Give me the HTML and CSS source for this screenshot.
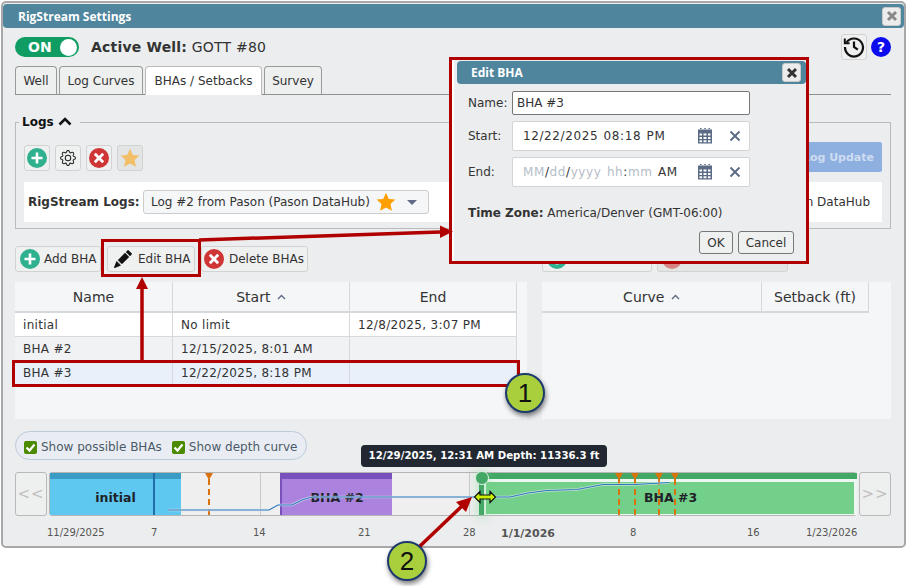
FILE: index.html

```html
<!DOCTYPE html>
<html lang="en" dir="ltr">
<head>
  <meta charset="UTF-8">
  <title>RigStream Settings</title>
  <link rel="stylesheet" href="styles.css">
</head>
<body>
  <svg class="defs" width="0" height="0">
    <symbol id="i-add" viewBox="0 0 20 20">
      <circle cx="10" cy="10" r="10" fill="#2fb18f"/>
      <path d="M10 4.5v11M4.5 10h11" stroke="#fff" stroke-width="2.6"/>
    </symbol>
    <symbol id="i-del" viewBox="0 0 20 20">
      <circle cx="10" cy="10" r="10" fill="#cf3535"/>
      <path d="M5.8 5.8l8.4 8.4M14.2 5.8l-8.4 8.4" stroke="#fff" stroke-width="2.8"/>
    </symbol>
    <symbol id="i-star" viewBox="0 0 20 20">
      <path d="M10 .8l2.8 6.1 6.6.7-4.900 4.500 1.400 6.600L10 15.400l-5.900 3.300 1.400-6.600L.6 7.600l6.600-.7z" fill="#ffa000"/>
    </symbol>
    <symbol id="i-cal" viewBox="0 0 16 16">
      <path fill="#5b6a85" fill-rule="evenodd" d="M3 0h1.500v2h-1.500zM7.250 0h1.500v2h-1.500zM11.500 0h1.500v2h-1.500zM1 1.500h14v14H1zM2.500 5.500v2h2.500v-2zM6.500 5.500v2h3v-2zM11 5.500v2h2.500v-2zM2.500 9v2h2.500v-2zM6.500 9v2h3v-2zM11 9v2h2.500v-2zM2.500 12.300v1.900h2.500v-1.900zM6.500 12.300v1.900h3v-1.900zM11 12.300v1.900h2.500v-1.900z"/>
    </symbol>
    <symbol id="i-x" viewBox="0 0 12 12">
      <path d="M1.500 1.500l9 9M10.500 1.500l-9 9" stroke="#5b6a85" stroke-width="1.900"/>
    </symbol>
    <symbol id="i-close" viewBox="0 0 12 12">
      <path d="M2 2l8 8M10 2l-8 8" stroke="currentColor" stroke-width="3"/>
    </symbol>
    <symbol id="i-sort" viewBox="0 0 9 6">
      <path d="M1 5l3.500-3.500L8 5" fill="none" stroke="#5f6b85" stroke-width="1.400"/>
    </symbol>
  </svg>

  <div class="window">
    <div class="titlebar">
      <span>RigStream Settings</span>
      <button class="close-btn faded"><svg width="12" height="12"><use href="#i-close"/></svg></button>
    </div>

    <div class="content">
      <div class="top-row">
        <div class="toggle"><span>ON</span><i class="knob"></i></div>
        <div class="active-well"><b>Active Well:</b> GOTT #80</div>
        <button class="history-btn">
          <svg width="22" height="22" viewBox="0 0 22 22" fill="none" stroke="#111" stroke-width="2.200">
            <path d="M3.500 6.500A9 9 0 1 1 2 11"/>
            <path d="M1.800 2.500v4.800h4.800" stroke-width="2"/>
            <path d="M11 5.500V11l3.800 2.600"/>
          </svg>
        </button>
        <div class="help">?</div>
      </div>

      <div class="tabs">
        <div class="tab tab-well">Well</div>
        <div class="tab tab-curves">Log Curves</div>
        <div class="tab tab-bhas active">BHAs / Setbacks</div>
        <div class="tab tab-survey">Survey</div>
      </div>

      <fieldset class="logs">
        <legend>Logs <svg width="14" height="9" viewBox="0 0 14 9" fill="none" stroke="#111" stroke-width="2.600"><path d="M1.500 7.500L7 2l5.500 5.500"/></svg></legend>
        <div class="log-tools">
          <button class="icon-btn"><svg width="20" height="20"><use href="#i-add"/></svg></button>
          <button class="icon-btn">
            <svg width="16" height="16" viewBox="0 0 16 16" fill="#222">
              <path d="M8 4.754a3.246 3.246 0 1 0 0 6.492 3.246 3.246 0 0 0 0-6.492zM5.754 8a2.246 2.246 0 1 1 4.492 0 2.246 2.246 0 0 1-4.492 0z"/>
              <path d="M9.796 1.343c-.527-1.790-3.065-1.790-3.592 0l-.094.319a.873.873 0 0 1-1.255.52l-.292-.16c-1.640-.892-3.433.902-2.540 2.541l.159.292a.873.873 0 0 1-.52 1.255l-.319.094c-1.790.527-1.790 3.065 0 3.592l.319.094a.873.873 0 0 1 .52 1.255l-.16.292c-.892 1.640.901 3.434 2.541 2.540l.292-.159a.873.873 0 0 1 1.255.52l.094.319c.527 1.790 3.065 1.790 3.592 0l.094-.319a.873.873 0 0 1 1.255-.52l.292.16c1.640.893 3.434-.902 2.540-2.541l-.159-.292a.873.873 0 0 1 .52-1.255l.319-.094c1.790-.527 1.790-3.065 0-3.592l-.319-.094a.873.873 0 0 1-.52-1.255l.16-.292c.893-1.640-.902-3.433-2.541-2.540l-.292.159a.873.873 0 0 1-1.255-.52l-.094-.319zm-2.633.283c.246-.835 1.428-.835 1.674 0l.094.319a1.873 1.873 0 0 0 2.693 1.115l.291-.16c.764-.415 1.600.42 1.184 1.185l-.159.292a1.873 1.873 0 0 0 1.116 2.692l.318.094c.835.246.835 1.428 0 1.674l-.319.094a1.873 1.873 0 0 0-1.115 2.693l.16.291c.415.764-.42 1.600-1.185 1.184l-.291-.159a1.873 1.873 0 0 0-2.693 1.116l-.094.318c-.246.835-1.428.835-1.674 0l-.094-.319a1.873 1.873 0 0 0-2.692-1.115l-.292.16c-.764.415-1.600-.42-1.184-1.185l.159-.291A1.873 1.873 0 0 0 1.945 8.930l-.319-.094c-.835-.246-.835-1.428 0-1.674l.319-.094A1.873 1.873 0 0 0 3.060 4.377l-.16-.292c-.415-.764.42-1.600 1.185-1.184l.292.159a1.873 1.873 0 0 0 2.692-1.115l.094-.319z"/>
            </svg>
          </button>
          <button class="icon-btn"><svg width="20" height="20"><use href="#i-del"/></svg></button>
          <button class="icon-btn disabled"><svg width="20" height="20" class="half"><use href="#i-star"/></svg></button>
          <button class="update-btn">Log Update</button>
        </div>
        <div class="log-strip">
          <b>RigStream Logs:</b>
          <div class="log-select">
            <span>Log #2 from Pason (Pason DataHub)</span>
            <svg width="20" height="20"><use href="#i-star"/></svg>
            <i class="caret"></i>
          </div>
          <span class="log-source">Pason DataHub</span>
        </div>
      </fieldset>

      <div class="bha-columns">
        <div>
          <div class="toolbar">
            <button class="text-btn btn-add"><svg width="20" height="20"><use href="#i-add"/></svg>Add BHA</button>
            <button class="text-btn btn-edit">
              <svg width="18" height="18" viewBox="0 0 16 16" fill="#111">
                <path d="M12.854.146a.5.5 0 0 0-.707 0L10.500 1.793 14.207 5.500l1.647-1.646a.5.5 0 0 0 0-.708l-3-3zm.646 6.061L9.793 2.500 3.293 9H3.500a.5.5 0 0 1 .5.5v.5h.5a.5.5 0 0 1 .5.5v.5h.5a.5.5 0 0 1 .5.5v.5h.5a.5.5 0 0 1 .5.5v.207l6.500-6.500zm-7.468 7.468A.5.5 0 0 1 6 13.500V13h-.5a.5.5 0 0 1-.5-.5V12h-.5a.5.5 0 0 1-.5-.5V11h-.5a.5.5 0 0 1-.5-.5V10h-.5a.499.499 0 0 1-.175-.032l-.179.178a.5.5 0 0 0-.11.168l-2 5a.5.5 0 0 0 .65.65l5-2a.5.5 0 0 0 .168-.11l.178-.178z"/>
              </svg>Edit BHA</button>
            <button class="text-btn btn-delete"><svg width="20" height="20"><use href="#i-del"/></svg>Delete BHAs</button>
          </div>
          <div class="grid-panel">
            <div class="grid bha-grid">
              <div class="cell head">Name</div>
              <div class="cell head">Start <svg class="sort" width="9" height="6"><use href="#i-sort"/></svg></div>
              <div class="cell head">End</div>
              <div class="cell">initial</div>
              <div class="cell">No limit</div>
              <div class="cell">12/8/2025, 3:07 PM</div>
              <div class="cell alt">BHA #2</div>
              <div class="cell alt">12/15/2025, 8:01 AM</div>
              <div class="cell alt"></div>
              <div class="cell sel">BHA #3</div>
              <div class="cell sel">12/22/2025, 8:18 PM</div>
              <div class="cell sel"></div>
            </div>
          </div>
        </div>
        <div>
          <div class="toolbar">
            <button class="text-btn setback-add"><svg width="20" height="20"><use href="#i-add"/></svg></button>
            <button class="text-btn setback-del"><svg width="20" height="20" class="half"><use href="#i-del"/></svg></button>
          </div>
          <div class="grid-panel">
            <div class="grid curve-grid">
              <div class="cell head">Curve <svg class="sort" width="9" height="6"><use href="#i-sort"/></svg></div>
              <div class="cell head">Setback (ft)</div>
            </div>
          </div>
        </div>
      </div>

      <div class="options">
        <label class="check"><i class="box"><svg width="11" height="11" viewBox="0 0 11 11" fill="none" stroke="#fff" stroke-width="2.200"><path d="M1.500 5.500l3 3 5-6"/></svg></i>Show possible BHAs</label>
        <label class="check"><i class="box"><svg width="11" height="11" viewBox="0 0 11 11" fill="none" stroke="#fff" stroke-width="2.200"><path d="M1.500 5.500l3 3 5-6"/></svg></i>Show depth curve</label>
      </div>

      <div class="timeline">
        <button class="nav-btn">&lt;&lt;</button>
        <div class="track">
          <i class="grid-line gl-1"></i><i class="grid-line gl-2"></i><i class="grid-line gl-3"></i><i class="grid-line gl-4"></i><i class="grid-line gl-5"></i>
          <div class="bar bar-initial">initial</div>
          <i class="start-line"></i>
          <div class="bar bar-2">BHA #2</div>
          <div class="bar bar-3">BHA #3</div>
          <i class="marker m-1"></i><i class="marker m-2"></i><i class="marker m-3"></i><i class="marker m-4"></i><i class="marker m-5"></i>
          <i class="handle"></i>
          <svg class="curve" width="806" height="42" viewBox="50 473 806 42" fill="none">
            <path stroke="#e4ebf2" stroke-opacity="0.7" stroke-width="2.600" d="M168 510H269L278 505H292L302 500L312 497H510L528 493L547 490.500L577 489.500L603 484.500H635L669 482.500"/>
            <path stroke="#2d79bd" stroke-width="1.100" d="M168 510H269L278 505H292L302 500L312 497H510L528 493L547 490.500L577 489.500L603 484.500H635L669 482.500"/>
          </svg>
        </div>
        <button class="nav-btn">&gt;&gt;</button>
      </div>
      <div class="axis">
        <span class="t-1">11/29/2025</span>
        <span class="t-2">7</span>
        <span class="t-3">14</span>
        <span class="t-4">21</span>
        <span class="t-5">28</span>
        <span class="t-6">1/1/2026</span>
        <span class="t-7">8</span>
        <span class="t-8">16</span>
        <span class="t-9">1/23/2026</span>
      </div>
    </div>
  </div>

  <!-- popup and callouts sit over the settings window -->
  <div class="dialog-frame">
    <div class="dialog">
      <div class="dialog-title">
        <span>Edit BHA</span>
        <button class="close-btn"><svg width="12" height="12"><use href="#i-close"/></svg></button>
      </div>
      <div class="dialog-body">
        <div class="form-row">
          <label>Name:</label>
          <div class="name-input">BHA #3</div>
        </div>
        <div class="form-row date-row">
          <label>Start:</label>
          <div class="date-input">
            <span class="date-text">12/22/2025 08:18 PM</span>
            <svg width="16" height="16"><use href="#i-cal"/></svg>
            <svg width="12" height="12"><use href="#i-x"/></svg>
          </div>
        </div>
        <div class="form-row date-row">
          <label>End:</label>
          <div class="date-input">
            <span class="date-text"><em>MM</em>/<em>dd</em>/<em>yyyy</em> <em>hh</em>:<em>mm</em> AM</span>
            <svg width="16" height="16"><use href="#i-cal"/></svg>
            <svg width="12" height="12"><use href="#i-x"/></svg>
          </div>
        </div>
        <div class="time-zone"><b>Time Zone:</b> America/Denver (GMT-06:00)</div>
        <div class="dialog-actions">
          <button class="plain-btn btn-ok">OK</button>
          <button class="plain-btn btn-cancel">Cancel</button>
        </div>
      </div>
    </div>
  </div>

  <div class="tooltip">12/29/2025, 12:31 AM Depth: 11336.3 ft</div>

  <svg class="callouts" width="906" height="586" viewBox="0 0 906 586">
    <g fill="none" stroke="#b00000" stroke-width="3">
      <rect x="102.500" y="240.500" width="97" height="35"/>
      <rect x="13.500" y="361.500" width="505" height="24"/>
      <path d="M142 361V287" stroke-width="3.500"/>
      <path d="M199 240L440 232" stroke-width="3.500"/>
      <path d="M419 547L462 506" stroke-width="3.500"/>
    </g>
    <g fill="#b00000">
      <path d="M142 277L136 289H148z"/>
      <path d="M453 231.500L440 225.500V238z"/>
      <path d="M472 497L456 502L466 512z"/>
    </g>
    <!-- resize cursor on the BHA #3 handle -->
    <path d="M474.500 497L480 491.500V495H490V491.500L495.500 497L490 502.500V499H480V502.500z" fill="#c8f000" stroke="#111" stroke-width="1.200"/>
  </svg>

  <div class="badge badge-1">1</div>
  <div class="badge badge-2">2</div>
</body>
</html>
```

FILE: styles.css

```css
* {
  box-sizing: border-box;
}
html, body {
  height: 586px;
}
body {
  margin: 0;
  background: #fff;
  color: #333;
  font-family: "DejaVu Sans", Verdana, sans-serif;
  font-size: 12px;
  position: relative;
  overflow: hidden;
}
button {
  font-family: inherit;
  font-size: 12px;
  color: #333;
}
.defs {
  position: absolute;
}

/* window */
.window {
  width: 905px;
  height: 547px;
  margin: 1px 0 0 1px;
  border: 2px solid #a8a8a8;
  border-radius: 5px;
  background: #ecedee;
}
.titlebar {
  height: 24px;
  margin-top: 1px;
  padding: 0 3px 0 15px;
  display: flex;
  align-items: center;
  justify-content: space-between;
  background: #4f869e;
  border-radius: 4px;
  color: #fff;
  font-family: "Open Sans", sans-serif;
  font-size: 12px;
  font-weight: 700;
}
.close-btn {
  width: 19px;
  height: 19px;
  padding: 0;
  display: flex;
  align-items: center;
  justify-content: center;
  background: #ececec;
  border: 1px solid #c9c9c9;
  border-radius: 3px;
  color: #333;
}
.close-btn.faded {
  color: #888;
}
.content {
  padding: 0 13px 0 12px;
}

/* top row */
.top-row {
  height: 26px;
  margin-top: 6px;
  display: flex;
  align-items: center;
}
.toggle {
  width: 64px;
  height: 20px;
  padding: 0 2px 0 13px;
  display: flex;
  align-items: center;
  justify-content: space-between;
  background: #0f9d63;
  border-radius: 10px;
  color: #fff;
  font-size: 14px;
  font-weight: 700;
}
.knob {
  width: 17px;
  height: 17px;
  background: #fff;
  border-radius: 50%;
}
.active-well {
  margin-left: 12px;
  flex: 1;
  font-size: 14px;
  letter-spacing: 0.2px;
}
.history-btn {
  width: 26px;
  height: 26px;
  padding: 0;
  display: flex;
  align-items: center;
  justify-content: center;
  background: #f0f0f0;
  border: 1px solid #d2d2d2;
  border-radius: 3px;
}
.help {
  width: 20px;
  height: 20px;
  margin: 0 0 0 4px;
  background: #0b0bee;
  border-radius: 50%;
  color: #fff;
  font-size: 14px;
  font-weight: 700;
  line-height: 20px;
  text-align: center;
}

/* tabs */
.tabs {
  height: 29px;
  margin-top: 6px;
  display: flex;
  border-bottom: 1px solid #8f8f8f;
}
.tab {
  height: 28px;
  margin-right: 2px;
  display: flex;
  align-items: center;
  justify-content: center;
  background: #eeefef;
  border: 1px solid #999;
  border-bottom: none;
  border-radius: 4px 4px 0 0;
}
.tab-well {
  width: 42px;
}
.tab-curves {
  width: 84px;
}
.tab-bhas {
  width: 117px;
}
.tab-survey {
  width: 58px;
}
.tab.active {
  height: 29px;
  background: #fff;
  border-color: #bbb;
}

/* logs */
.logs {
  height: 114px;
  margin: 20px 0 0;
  padding: 16px 8px 0;
  border: 1px solid #bbb;
}
.logs legend {
  padding: 0 8px 0 3px;
  margin-left: -5px;
  font-size: 12px;
  font-weight: 700;
  color: #111;
}
.log-tools {
  height: 26px;
  display: flex;
  gap: 5px;
}
.icon-btn {
  width: 26px;
  height: 26px;
  padding: 0;
  display: flex;
  align-items: center;
  justify-content: center;
  background: #eff0f0;
  border: 1px solid #d2d2d2;
  border-radius: 3px;
}
.icon-btn.disabled {
  background: #e3e4e4;
}
.half {
  opacity: 0.55;
}
.update-btn {
  width: 120px;
  height: 30px;
  margin: -3px 0 0 auto;
  padding: 0 8px;
  background: #8db0e1;
  border: none;
  border-radius: 2px;
  color: #cfdcf0;
  font-size: 11px;
  font-weight: 700;
  text-align: right;
}
.log-strip {
  height: 40px;
  margin-top: 11px;
  padding: 0 12px 0 4px;
  display: flex;
  align-items: center;
  background: #fff;
}
.log-strip b {
  flex: none;
  width: 115px;
  white-space: nowrap;
}
.log-select {
  flex: none;
  width: 286px;
  height: 24px;
  padding: 0 7px;
  display: flex;
  align-items: center;
  background: #f5f6f8;
  border: 1px solid #ccc;
  border-radius: 3px;
  white-space: nowrap;
}
.log-select svg {
  margin-left: 6px;
}
.caret {
  margin-left: 11px;
  border-left: 5px solid transparent;
  border-right: 5px solid transparent;
  border-top: 5px solid #5f6b85;
}
.log-source {
  margin-left: auto;
}

/* BHA and curve tables */
.bha-columns {
  margin-top: 17px;
  display: grid;
  grid-template-columns: 512px 349px;
  column-gap: 15px;
}
.toolbar {
  height: 26px;
  display: flex;
  gap: 6px;
}
.text-btn {
  height: 26px;
  padding: 0;
  display: flex;
  align-items: center;
  background: #eff0f0;
  border: 1px solid #d2d2d2;
  border-radius: 3px;
  white-space: nowrap;
}
.btn-add {
  width: 86px;
  padding-left: 4px;
  gap: 4px;
}
.btn-edit {
  width: 88px;
  padding-left: 6px;
  gap: 6px;
}
.btn-delete {
  width: 107px;
  padding-left: 2px;
  gap: 5px;
}
.setback-add {
  width: 110px;
  padding-left: 4px;
  margin-right: -1px;
}
.setback-del {
  width: 131px;
  padding-left: 4px;
  background: #e3e4e4;
}
.grid-panel {
  height: 137px;
  margin-top: 10px;
  background: #f5f6f8;
}
.grid {
  display: grid;
}
.bha-grid {
  width: 502px;
  grid-template-columns: 158px 177px 167px;
  grid-template-rows: 31px 24px 24px 24px;
}
.curve-grid {
  width: 327px;
  grid-template-columns: 220px 107px;
  grid-template-rows: 31px;
}
.cell {
  padding: 0 8px;
  display: flex;
  align-items: center;
  background: #fff;
  border-right: 1px solid #d6d8db;
  border-bottom: 1px solid #d6d8db;
  letter-spacing: 0.3px;
  white-space: pre;
}
.cell.head {
  padding-top: 1px;
  justify-content: center;
  background: #f5f6f8;
  font-size: 14px;
  letter-spacing: 0;
  border-bottom: 2px solid #d6d8db;
}
.cell.alt {
  background: #f1f2f3;
}
.cell.sel {
  background: #e9f0fa;
}
.sort {
  margin-left: 2px;
}

/* timeline options */
.options {
  width: 292px;
  height: 29px;
  margin-top: 12px;
  padding: 3px 8px 0;
  display: flex;
  align-items: center;
  gap: 10px;
  background: #e9edf3;
  border: 1px solid #bccbd8;
  border-radius: 15px;
}
.check {
  display: flex;
  align-items: center;
  gap: 4px;
  color: #4b5a68;
}
.box {
  width: 13px;
  height: 13px;
  display: flex;
  align-items: center;
  justify-content: center;
  background: #4c8a00;
  border-radius: 2px;
}

/* timeline */
.timeline {
  height: 44px;
  margin-top: 12px;
  display: flex;
  gap: 2px;
}
.nav-btn {
  width: 32px;
  height: 44px;
  padding: 0;
  background: #eeefef;
  border: 1px solid #b9b9b9;
  border-radius: 3px;
  color: #c0c0c0;
  font-size: 15px;
  letter-spacing: 1px;
}
.track {
  width: 808px;
  height: 44px;
  position: relative;
  background: #efefef;
  border: 1px solid #b5b5b5;
  border-radius: 3px;
}
.grid-line {
  position: absolute;
  top: 0;
  bottom: 0;
  width: 1px;
  background: #c9c9c9;
}
.gl-1 { left: 210px; }
.gl-2 { left: 315px; }
.gl-3 { left: 419px; }
.gl-4 { left: 478px; }
.gl-5 { left: 702px; }
.bar {
  position: absolute;
  top: 0;
  bottom: 0;
  display: flex;
  align-items: center;
  justify-content: center;
  color: #1e2228;
  font-size: 12.5px;
  font-weight: 700;
}
.bar-initial {
  left: 0;
  width: 131px;
  background: #5fc8f0;
  border-top: 6px solid #3a9cc4;
}
.bar-2 {
  left: 230px;
  width: 112px;
  background: #ab82de;
  border-top: 6px solid #7a50bc;
  border-left: 2px solid #7a50bc;
}
.bar-3 {
  left: 434px;
  width: 373px;
  background: #73d08a;
  border-top: 6px solid #43a866;
  box-shadow: inset 2px 3px 0 #ecf8ef, inset -3px -1px 0 #ecf8ef;
}
.start-line {
  position: absolute;
  left: 103px;
  top: 0;
  bottom: 0;
  width: 2px;
  background: #1f6ea8;
}
.marker {
  position: absolute;
  top: 6px;
  bottom: 0;
  border-left: 2px dashed #d9730d;
}
.marker::before {
  content: "";
  position: absolute;
  top: -6px;
  left: -5px;
  border-left: 4px solid transparent;
  border-right: 4px solid transparent;
  border-top: 7px solid #d9730d;
}
.m-1 { left: 158px; }
.m-2 { left: 568px; }
.m-3 { left: 584px; }
.m-4 { left: 608px; }
.m-5 { left: 624px; }
.handle {
  position: absolute;
  left: 429px;
  top: 0;
  bottom: 0;
  width: 5px;
  background: #43a866;
  box-shadow: 0 0 8px 3px rgba(120, 210, 140, 0.35);
}
.handle::before {
  content: "";
  position: absolute;
  left: -4px;
  top: -2px;
  width: 12px;
  height: 12px;
  background: #43a866;
  border: 1px solid #dff2e4;
  border-radius: 50%;
}
.curve {
  position: absolute;
  left: 0;
  top: 0;
}
.axis {
  height: 20px;
  margin-top: 8px;
  position: relative;
  color: #555;
  font-size: 10px;
}
.axis span {
  position: absolute;
  top: 3px;
  white-space: nowrap;
}
.t-1 { left: 32px; }
.t-2 { left: 136px; }
.t-3 { left: 238px; }
.t-4 { left: 343px; }
.t-5 { left: 448px; }
.t-6 { left: 486px; font-weight: 700; font-size: 11px; }
.t-7 { left: 615px; }
.t-8 { left: 732px; }
.t-9 { left: 791px; }

/* Edit BHA popup */
.dialog-frame {
  position: absolute;
  left: 449px;
  top: 57px;
  width: 360px;
  height: 207px;
  background: #fff;
  border: 3px solid #b00000;
}
.dialog {
  height: 100%;
  margin-left: 2px;
  background: #ecedee;
}
.dialog-title {
  height: 23px;
  margin: 0 0 0 3px;
  position: relative;
  top: 1px;
  padding: 0 5px 0 14px;
  display: flex;
  align-items: center;
  justify-content: space-between;
  background: #4f869e;
  border-radius: 4px;
  color: #fff;
  font-family: "Open Sans", sans-serif;
  font-weight: 700;
}
.dialog-body {
  padding: 8px 11px 0 14px;
}
.form-row {
  display: flex;
  align-items: center;
}
.form-row label {
  width: 44px;
}
.name-input {
  width: 238px;
  height: 24px;
  padding: 0 4px;
  display: flex;
  align-items: center;
  background: #fff;
  border: 1px solid #777;
  border-radius: 2px;
}
.date-row {
  margin-top: 6px;
}
.date-input {
  width: 238px;
  height: 30px;
  padding: 0 8px 0 10px;
  display: flex;
  align-items: center;
  background: #fff;
  border: 1px solid #d2d4d6;
  border-radius: 2px;
}
.date-text {
  flex: 1;
  letter-spacing: 0.6px;
  word-spacing: 1px;
  white-space: nowrap;
}
.date-text em {
  color: #b4bdc8;
  font-style: normal;
}
.date-input svg + svg {
  margin-left: 16px;
}
.time-zone {
  margin-top: 19px;
}
.dialog-actions {
  margin: 11px 0 0;
  padding-right: 1px;
  display: flex;
  justify-content: flex-end;
  gap: 5px;
}
.plain-btn {
  height: 23px;
  padding: 0;
  background: #eff0f0;
  border: 1px solid #777;
  border-radius: 3px;
}
.btn-ok {
  width: 34px;
}
.btn-cancel {
  width: 56px;
}

/* callouts */
.tooltip {
  position: absolute;
  left: 361px;
  top: 445px;
  width: 246px;
  height: 22px;
  background: #212831;
  border-radius: 4px;
  color: #fff;
  font-size: 10.2px;
  font-weight: 700;
  line-height: 21px;
  text-align: center;
  white-space: nowrap;
}
.callouts {
  position: absolute;
  left: 0;
  top: 0;
}
.badge {
  position: absolute;
  width: 40px;
  height: 40px;
  background: #a9cf3c;
  border: 2px solid #1d3a6e;
  border-radius: 50%;
  box-shadow: 1px 3px 5px rgba(0, 0, 0, 0.5);
  color: #111;
  font-family: "Liberation Sans", Arial, sans-serif;
  font-size: 26px;
  line-height: 36px;
  text-align: center;
}
.badge-1 {
  left: 505px;
  top: 373px;
}
.badge-2 {
  left: 387px;
  top: 541px;
}
```
